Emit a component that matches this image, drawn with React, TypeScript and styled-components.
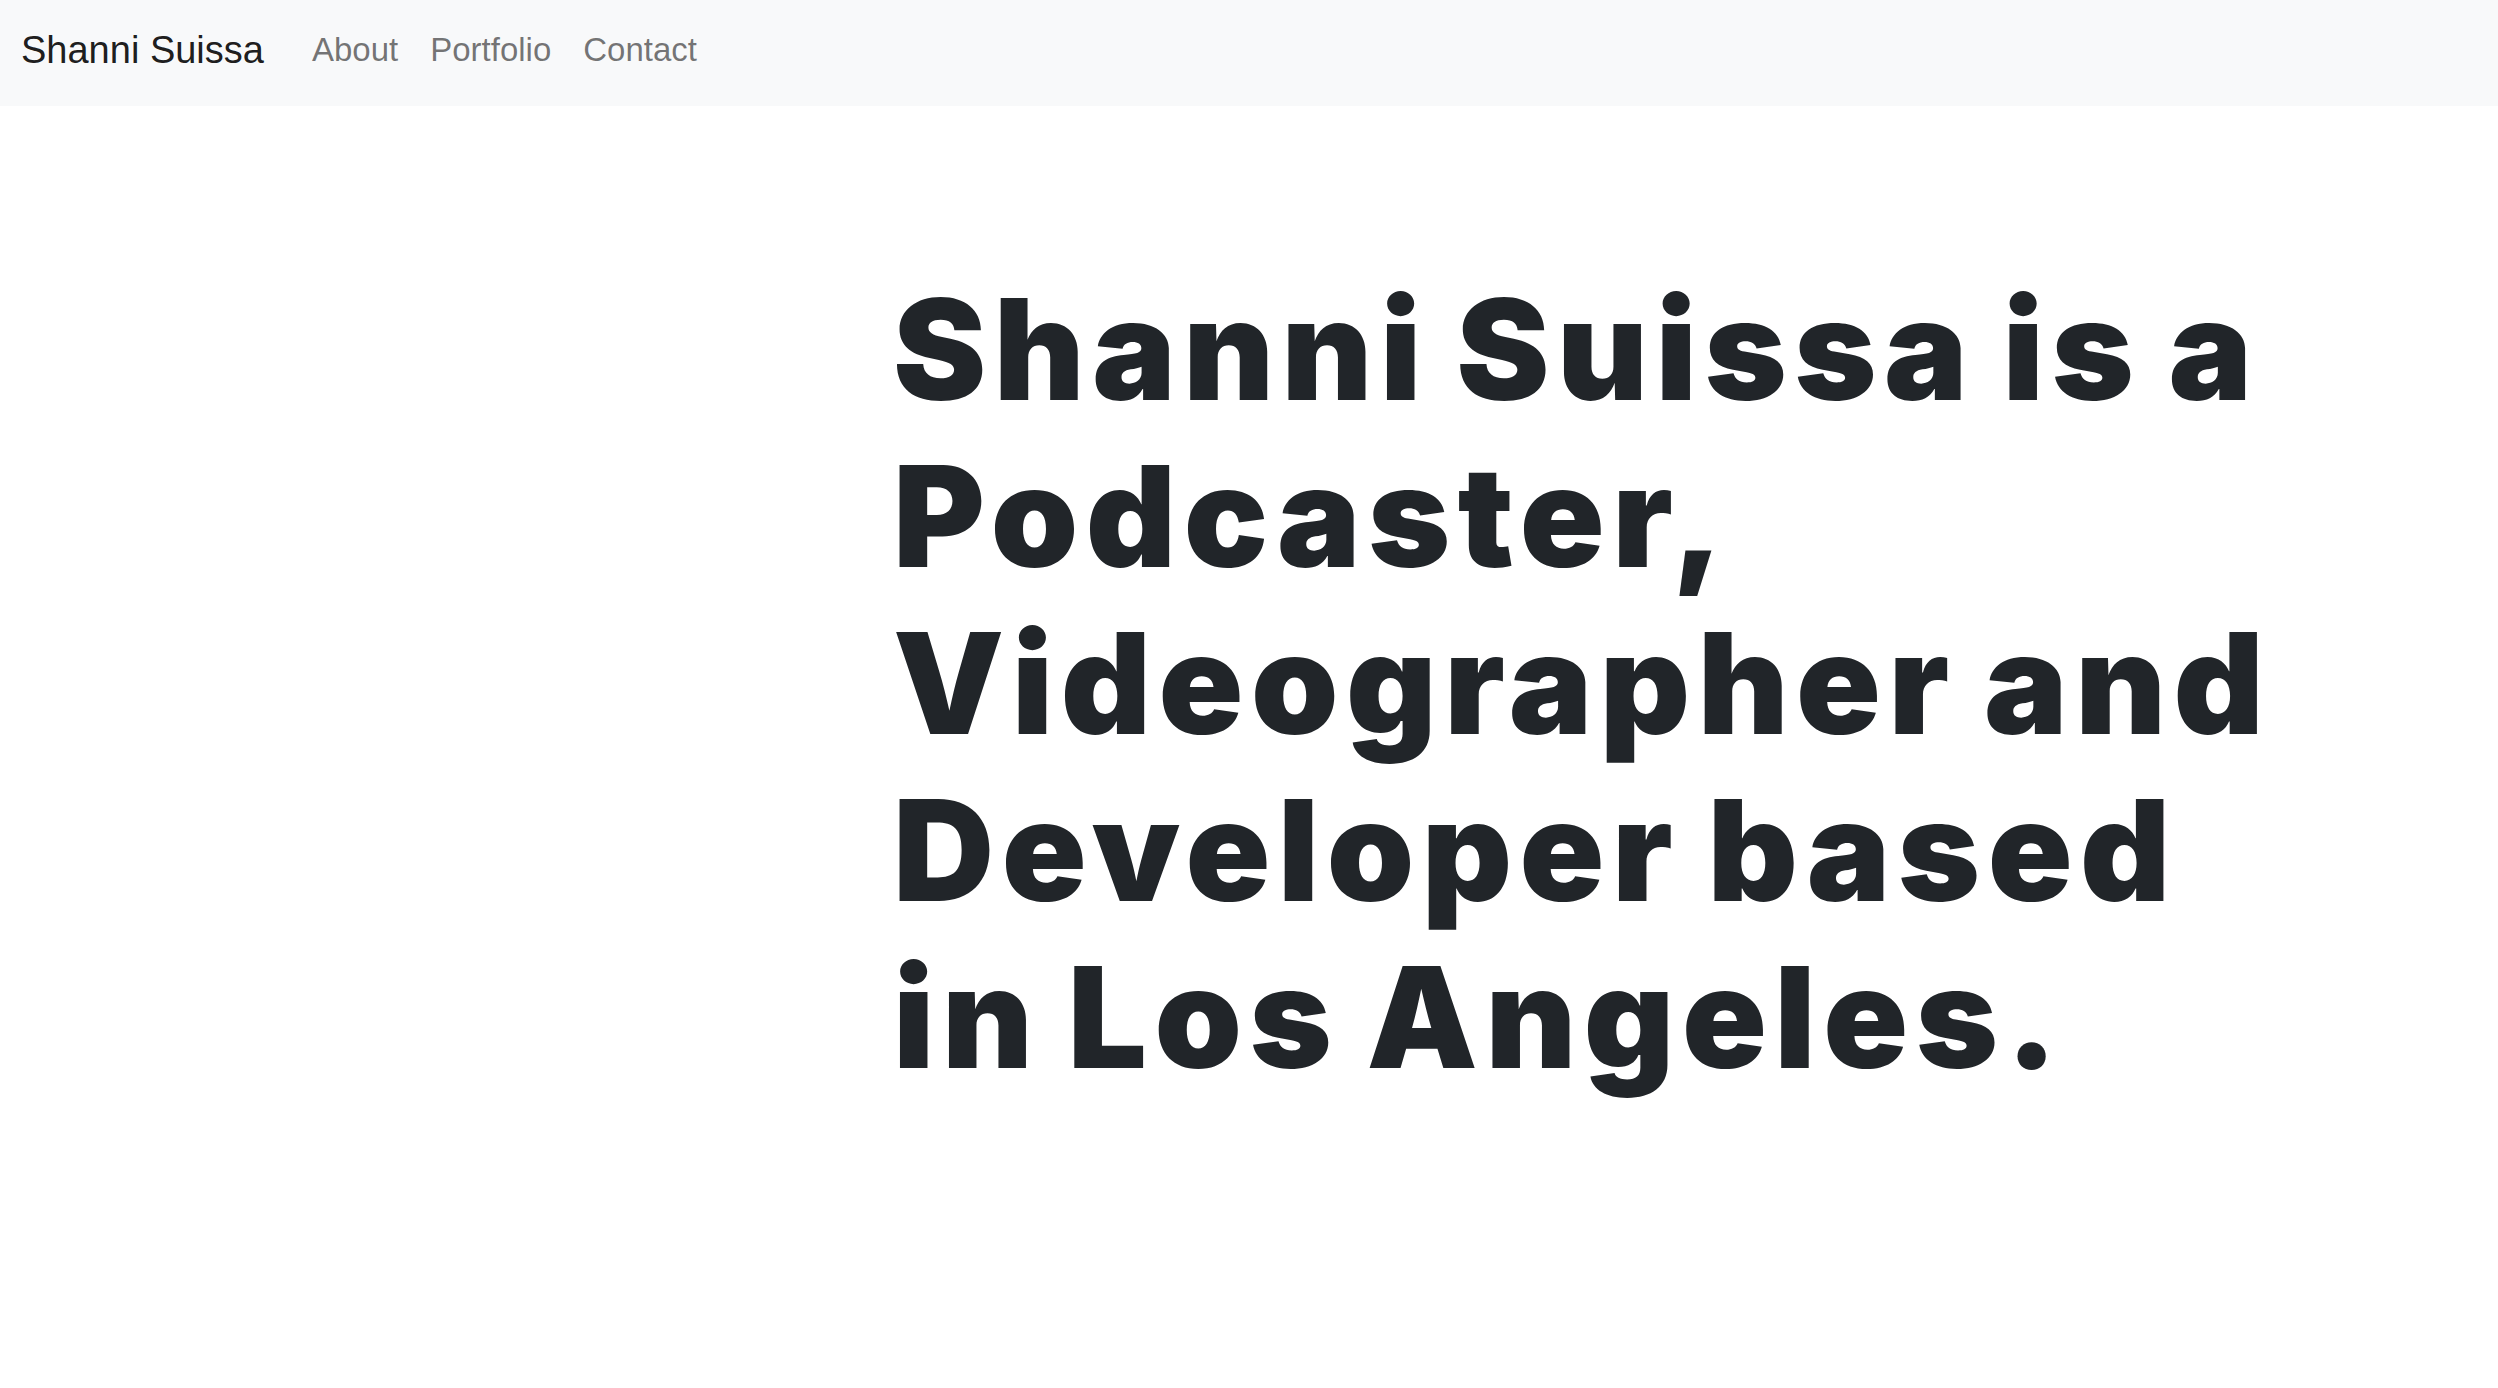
import React from "react";
import styled, { createGlobalStyle } from "styled-components";

const GlobalStyle = createGlobalStyle`
  html, body {
    margin: 0;
    padding: 0;
    background: #ffffff;
  }
  body {
    font-family: "Liberation Sans", Arial, sans-serif;
    color: #212529;
  }
`;

const NAV_LINKS = ["About", "Portfolio", "Contact"];

const HEADLINE = [
  "Shanni Suissa is a",
  "Podcaster,",
  "Videographer and",
  "Developer based",
  "in Los Angeles.",
];

function App() {
  return (
    <>
      <GlobalStyle />
      <Navbar>
        <Brand href="#">Shanni Suissa</Brand>
        <NavList>
          {NAV_LINKS.map((label) => (
            <NavLink key={label} href="#">
              {label}
            </NavLink>
          ))}
        </NavList>
      </Navbar>
      <Hero>
        <Spacer />
        <Headline>
          {HEADLINE.map((line, idx) => (
            <Line key={idx}>{line}</Line>
          ))}
        </Headline>
      </Hero>
    </>
  );
}

const Navbar = styled.nav`
  display: flex;
  align-items: center;
  height: 106px;
  box-sizing: border-box;
  padding: 0 0 6px 21px;
  background-color: #f8f9fa;
`;

const Brand = styled.a`
  font-size: 38px;
  color: rgba(0, 0, 0, 0.9);
  text-decoration: none;
  white-space: nowrap;
  margin-right: 32px;
`;

const NavList = styled.div`
  display: flex;
  align-items: center;
`;

const NavLink = styled.a`
  font-size: 33px;
  color: rgba(0, 0, 0, 0.55);
  text-decoration: none;
  padding: 0 16px;
`;

const Hero = styled.main`
  display: grid;
  grid-template-columns: 893px 1fr;
  margin-top: 160px;
`;

const Spacer = styled.div``;

const Headline = styled.h1`
  margin: 0;
  font-family: Inter, "Noto Sans", sans-serif;
  font-weight: 900;
  font-size: 140px;
  line-height: 167px;
  color: #212529;
  letter-spacing: 7.5px;
  word-spacing: -8px;
`;

const Line = styled.span`
  display: block;
  white-space: nowrap;
`;

export default App;
